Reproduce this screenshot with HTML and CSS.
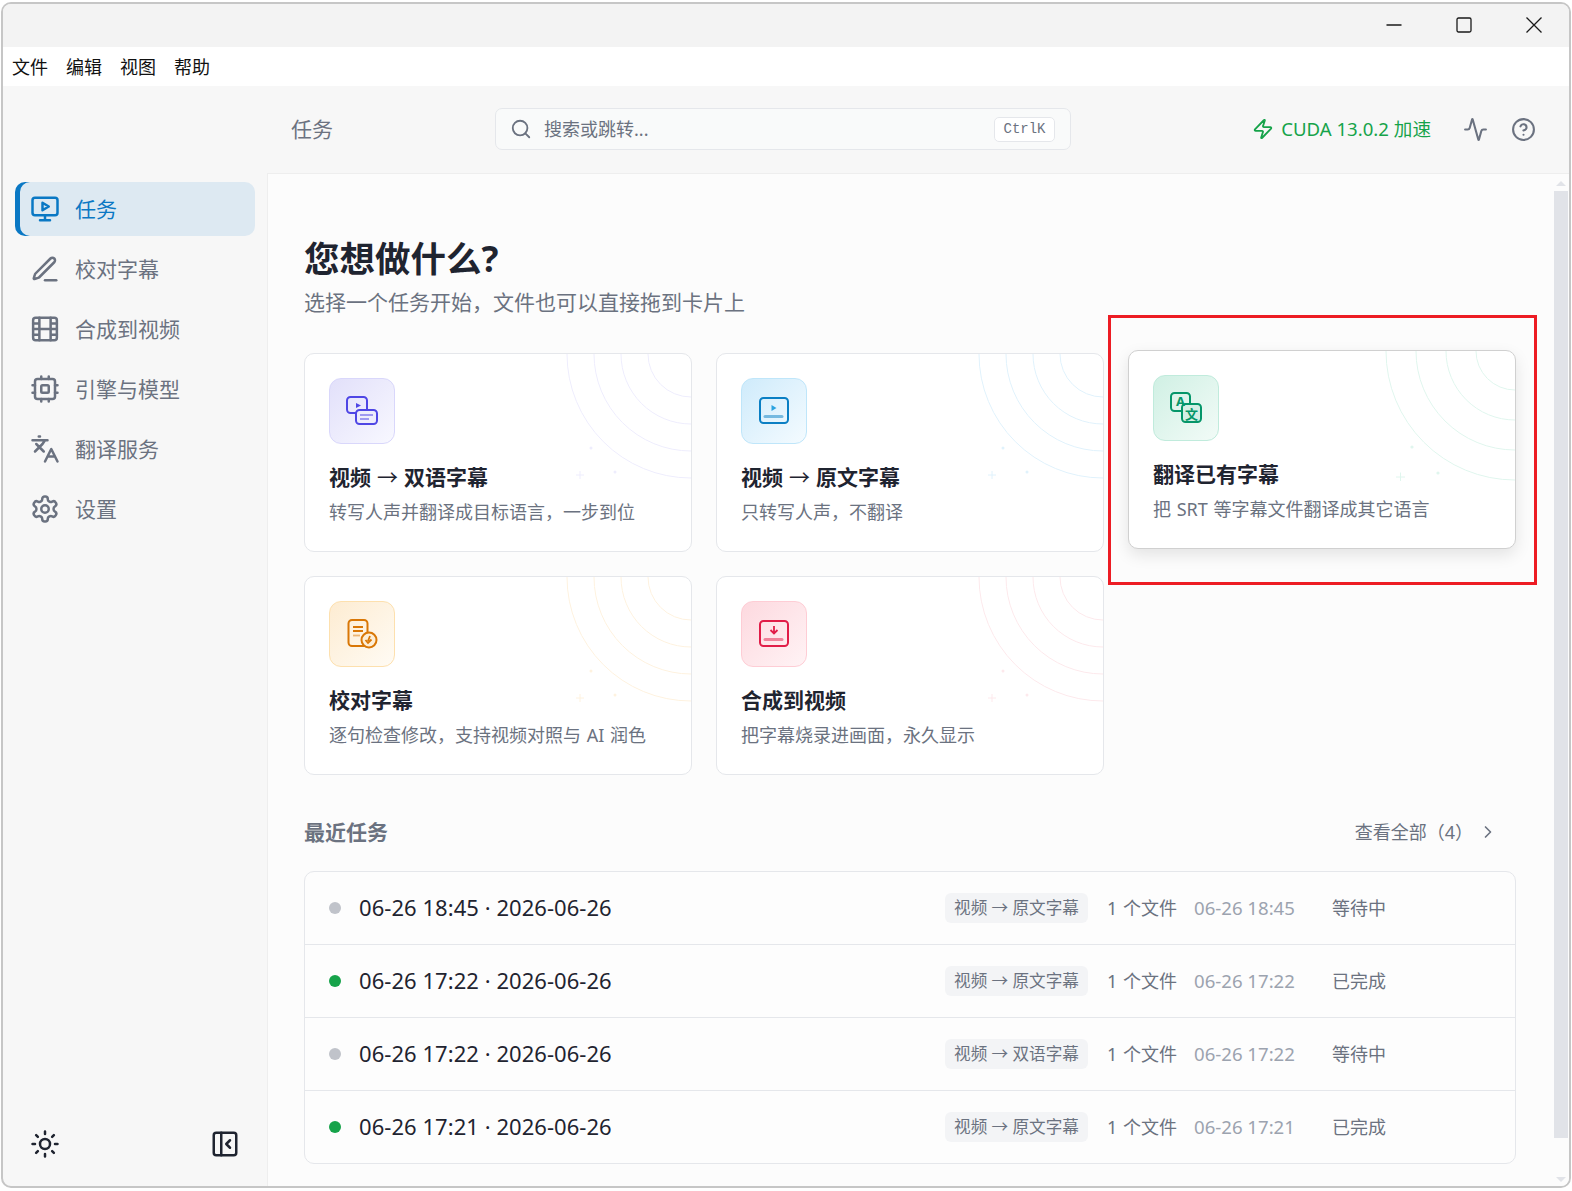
FILE: index.html
```html
<!DOCTYPE html>
<html lang="zh">

<head>
    <title>任务</title>
    <meta charset="utf-8">
    <meta name="viewport" content="width=device-width, initial-scale=1.0">
    <link rel="stylesheet" href="styles.css">
</head>

<body>
    <svg class="defs" width="0" height="0">
        <symbol id="rings" viewBox="0 0 130 130">
            <g fill="none" stroke="currentColor" stroke-width="1">
                <circle cx="130" cy="0" r="43" />
                <circle cx="130" cy="0" r="70" />
                <circle cx="130" cy="0" r="97" />
                <circle cx="130" cy="0" r="124" />
                <path d="M15 121h8M19 117v8" />
            </g>
            <circle cx="30" cy="94" r="1.5" fill="currentColor" />
            <circle cx="54" cy="118" r="1.5" fill="currentColor" />
        </symbol>
        <symbol id="rings-big" viewBox="0 0 130 130">
            <g fill="none" stroke="currentColor" stroke-width="1">
                <circle cx="130" cy="0" r="39" />
                <circle cx="130" cy="0" r="69" />
                <circle cx="130" cy="0" r="99" />
                <circle cx="130" cy="0" r="129" />
                <path d="M11 126h9M15.500 121.500v9" />
            </g>
            <circle cx="27" cy="96" r="1.600" fill="currentColor" />
            <circle cx="53" cy="122" r="1.600" fill="currentColor" />
        </symbol>
    </svg>

    <div class="window">
        <div class="titlebar">
            <button class="winbtn"><svg viewBox="0 0 16 16" width="16" height="16">
                    <path d="M0.500 8h15" />
                </svg></button>
            <button class="winbtn"><svg viewBox="0 0 16 16" width="16" height="16">
                    <rect x="1" y="1" width="14" height="14" rx="1.500" />
                </svg></button>
            <button class="winbtn"><svg viewBox="0 0 16 16" width="16" height="16">
                    <path d="M0.500 0.500l15 15M15.500 0.500l-15 15" />
                </svg></button>
        </div>

        <div class="menubar">
            <span>文件</span>
            <span>编辑</span>
            <span>视图</span>
            <span>帮助</span>
        </div>

        <div class="app">
            <aside class="sidebar">
                <nav class="nav">
                    <a class="nav-item active">
                        <svg class="ico" viewBox="0 0 24 24">
                            <rect x="2" y="3" width="20" height="14" rx="2" />
                            <path d="M12 17v4M8 21h8" />
                            <path d="M10 7l5 3-5 3z" />
                        </svg>
                        任务
                    </a>
                    <a class="nav-item">
                        <svg class="ico" viewBox="0 0 24 24">
                            <path d="M12 21h9" />
                            <path d="M16.400 3.600a2.100 2.100 0 0 1 3 3L7.400 18.600a2 2 0 0 1-.9.500l-2.900.900a.5.5 0 0 1-.6-.6l.9-2.900a2 2 0 0 1 .5-.9z" />
                        </svg>
                        校对字幕
                    </a>
                    <a class="nav-item">
                        <svg class="ico" viewBox="0 0 24 24">
                            <rect x="2.500" y="3" width="19" height="18" rx="2" />
                            <path d="M7.500 3v18M16.500 3v18M2.500 12h19M2.500 7.500h5M2.500 16.500h5M16.500 7.500h5M16.500 16.500h5" />
                        </svg>
                        合成到视频
                    </a>
                    <a class="nav-item">
                        <svg class="ico" viewBox="0 0 24 24">
                            <rect x="4" y="4" width="16" height="16" rx="2" />
                            <rect x="9" y="9" width="6" height="6" rx="1" />
                            <path d="M15 2v2M15 20v2M2 15h2M2 9h2M20 15h2M20 9h2M9 2v2M9 20v2" />
                        </svg>
                        引擎与模型
                    </a>
                    <a class="nav-item">
                        <svg class="ico" viewBox="0 0 24 24">
                            <path d="M5 8l6 6M4 14l6-6 2-3M2 5h12M7 2h1M22 22l-5-10-5 10M14 18h6" />
                        </svg>
                        翻译服务
                    </a>
                    <a class="nav-item">
                        <svg class="ico" viewBox="0 0 24 24">
                            <path d="M12.220 2h-.44a2 2 0 0 0-2 2v.18a2 2 0 0 1-1 1.730l-.43.250a2 2 0 0 1-2 0l-.15-.08a2 2 0 0 0-2.730.730l-.22.380a2 2 0 0 0 .730 2.730l.15.100a2 2 0 0 1 1 1.720v.510a2 2 0 0 1-1 1.740l-.15.090a2 2 0 0 0-.730 2.730l.22.380a2 2 0 0 0 2.730.730l.15-.08a2 2 0 0 1 2 0l.43.250a2 2 0 0 1 1 1.730V20a2 2 0 0 0 2 2h.44a2 2 0 0 0 2-2v-.18a2 2 0 0 1 1-1.730l.43-.25a2 2 0 0 1 2 0l.15.080a2 2 0 0 0 2.730-.730l.22-.39a2 2 0 0 0-.730-2.730l-.15-.08a2 2 0 0 1-1-1.740v-.5a2 2 0 0 1 1-1.740l.15-.09a2 2 0 0 0 .730-2.730l-.22-.38a2 2 0 0 0-2.730-.730l-.15.080a2 2 0 0 1-2 0l-.43-.25a2 2 0 0 1-1-1.730V4a2 2 0 0 0-2-2z" />
                            <circle cx="12" cy="12" r="3" />
                        </svg>
                        设置
                    </a>
                </nav>

                <div class="side-foot">
                    <svg class="ico dark" viewBox="0 0 24 24">
                        <circle cx="12" cy="12" r="4" />
                        <path d="M12 2v2M12 20v2M4.900 4.900l1.400 1.400M17.700 17.700l1.400 1.400M2 12h2M20 12h2M6.300 17.700l-1.400 1.400M19.100 4.900l-1.400 1.400" />
                    </svg>
                    <svg class="ico dark" viewBox="0 0 24 24">
                        <rect x="3" y="3" width="18" height="18" rx="2" />
                        <path d="M9 3v18M16 15l-3-3 3-3" />
                    </svg>
                </div>
            </aside>

            <div class="right">
                <header class="topbar">
                    <div class="page-title">任务</div>
                    <div class="search">
                        <svg class="search-ico" viewBox="0 0 24 24">
                            <circle cx="11" cy="11" r="8" />
                            <path d="M21 21l-4.300-4.300" />
                        </svg>
                        <span class="search-text">搜索或跳转...</span>
                        <kbd>CtrlK</kbd>
                    </div>
                    <div class="top-actions">
                        <svg class="bolt" viewBox="0 0 24 24">
                            <path d="M4 14a1 1 0 0 1-.78-1.630l9.900-10.200a.5.5 0 0 1 .86.46l-1.920 6.020A1 1 0 0 0 13 10h7a1 1 0 0 1 .78 1.630l-9.900 10.200a.5.5 0 0 1-.86-.46l1.920-6.020A1 1 0 0 0 11 14z" />
                        </svg>
                        <span class="cuda">CUDA 13.0.2 加速</span>
                        <svg class="ico top-ico first" viewBox="0 0 24 24">
                            <path d="M22 12h-2.480a2 2 0 0 0-1.930 1.460l-2.350 8.360a.25.25 0 0 1-.48 0L9.240 2.180a.25.25 0 0 0-.48 0l-2.350 8.360A2 2 0 0 1 4.490 12H2" />
                        </svg>
                        <svg class="ico top-ico" viewBox="0 0 24 24">
                            <circle cx="12" cy="12" r="10" />
                            <path d="M9.090 9a3 3 0 0 1 5.830 1c0 2-3 3-3 3M12 17h.01" />
                        </svg>
                    </div>
                </header>

                <main class="main">
                    <div class="content">
                        <h1>您想做什么?</h1>
                        <p class="sub">选择一个任务开始，文件也可以直接拖到卡片上</p>

                        <div class="cards">
                            <div class="card indigo">
                                <svg class="rings"><use href="#rings" /></svg>
                                <div class="tile">
                                    <svg viewBox="0 0 66 66">
                                        <rect x="18" y="19" width="20" height="16" rx="3.500" class="line" />
                                        <path d="M27 25l5 2.500-5 2.500z" class="solid" />
                                        <rect x="27" y="32" width="21" height="14" rx="3.500" class="line back" />
                                        <path d="M31 37h13M31 41h9" class="soft" />
                                    </svg>
                                </div>
                                <h3>视频 <span class="arw">→</span> 双语字幕</h3>
                                <p>转写人声并翻译成目标语言，一步到位</p>
                            </div>

                            <div class="card blue">
                                <svg class="rings"><use href="#rings" /></svg>
                                <div class="tile">
                                    <svg viewBox="0 0 66 66">
                                        <rect x="19" y="20" width="28" height="25" rx="3.500" class="line" />
                                        <path d="M30.500 27l5 3-5 3z" class="solid tint" />
                                        <path d="M24 38.500h17" class="soft thick" />
                                    </svg>
                                </div>
                                <h3>视频 <span class="arw">→</span> 原文字幕</h3>
                                <p>只转写人声，不翻译</p>
                            </div>

                            <div class="card green hovered">
                                <svg class="rings"><use href="#rings-big" /></svg>
                                <div class="tile">
                                    <svg viewBox="0 0 66 66">
                                        <rect x="18" y="18" width="19" height="18" rx="3.500" class="line" />
                                        <rect x="29" y="29" width="19" height="18" rx="3.500" class="line back" />
                                        <text x="27.500" y="31" class="tile-letter">A</text>
                                        <text x="38.500" y="43.500" class="tile-letter">文</text>
                                    </svg>
                                </div>
                                <h3>翻译已有字幕</h3>
                                <p>把 SRT 等字幕文件翻译成其它语言</p>
                                <div class="annotation"></div>
                            </div>

                            <div class="card orange">
                                <svg class="rings"><use href="#rings" /></svg>
                                <div class="tile">
                                    <svg viewBox="0 0 66 66">
                                        <rect x="19.500" y="19" width="19" height="26" rx="3.500" class="line" />
                                        <path d="M24 26h10M24 30h10" class="bar" />
                                        <path d="M24 34.500h7" class="soft" />
                                        <circle cx="40" cy="39" r="7.500" class="line back" />
                                        <path d="M41 35l-2 5M36.500 39l2.500 3 3.500-3.500" class="bar" />
                                    </svg>
                                </div>
                                <h3>校对字幕</h3>
                                <p>逐句检查修改，支持视频对照与 AI 润色</p>
                            </div>

                            <div class="card pink">
                                <svg class="rings"><use href="#rings" /></svg>
                                <div class="tile">
                                    <svg viewBox="0 0 66 66">
                                        <rect x="19" y="20" width="28" height="25" rx="3.500" class="line" />
                                        <path d="M33 25v7M29.500 29l3.500 3.500 3.500-3.500" class="bar" />
                                        <path d="M24 38.500h17" class="soft thick" />
                                    </svg>
                                </div>
                                <h3>合成到视频</h3>
                                <p>把字幕烧录进画面，永久显示</p>
                            </div>
                        </div>

                        <div class="recent-head">
                            <h2>最近任务</h2>
                            <a class="see-all">查看全部（4）
                                <svg class="ico chev" viewBox="0 0 24 24">
                                    <path d="M9 18l6-6-6-6" />
                                </svg>
                            </a>
                        </div>

                        <div class="tasks">
                            <div class="task">
                                <i class="dot"></i>
                                <span class="task-name">06-26 18:45 · 2026-06-26</span>
                                <span class="tag">视频 → 原文字幕</span>
                                <span class="files">1 个文件</span>
                                <span class="time">06-26 18:45</span>
                                <span class="status">等待中</span>
                            </div>
                            <div class="task">
                                <i class="dot done"></i>
                                <span class="task-name">06-26 17:22 · 2026-06-26</span>
                                <span class="tag">视频 → 原文字幕</span>
                                <span class="files">1 个文件</span>
                                <span class="time">06-26 17:22</span>
                                <span class="status">已完成</span>
                            </div>
                            <div class="task">
                                <i class="dot"></i>
                                <span class="task-name">06-26 17:22 · 2026-06-26</span>
                                <span class="tag">视频 → 双语字幕</span>
                                <span class="files">1 个文件</span>
                                <span class="time">06-26 17:22</span>
                                <span class="status">等待中</span>
                            </div>
                            <div class="task">
                                <i class="dot done"></i>
                                <span class="task-name">06-26 17:21 · 2026-06-26</span>
                                <span class="tag">视频 → 原文字幕</span>
                                <span class="files">1 个文件</span>
                                <span class="time">06-26 17:21</span>
                                <span class="status">已完成</span>
                            </div>
                        </div>
                    </div>

                    <div class="scrollbar">
                        <i class="arrow up"></i>
                        <div class="thumb"></div>
                        <i class="arrow down"></i>
                    </div>
                </main>
            </div>
        </div>
    </div>
</body>

</html>
```

FILE: styles.css
```css
* {
    box-sizing: border-box;
}

html,
body {
    margin: 0;
    height: 100%;
    background-color: #ffffff;
}

body {
    padding: 2px 1px 3px 1px;
    font-family: "Noto Sans", "Noto Sans CJK SC", sans-serif;
    color: #1f2430;
}

.defs {
    position: absolute;
}

.window {
    height: 1186px;
    border: 2px solid #c6c6c6;
    border-radius: 10px;
    overflow: hidden;
    display: flex;
    flex-direction: column;
    background-color: #f7f7f7;
}

/* title + menu */

.titlebar {
    height: 43px;
    flex: none;
    display: flex;
    justify-content: flex-end;
    padding-bottom: 2px;
    background-color: #f3f3f3;
}

.winbtn {
    width: 70px;
    border: none;
    padding: 0;
    background: none;
    display: flex;
    align-items: center;
    justify-content: center;
}

.winbtn svg {
    fill: none;
    stroke: #1a1a1a;
    stroke-width: 1.3;
}

.menubar {
    height: 39px;
    flex: none;
    display: flex;
    align-items: center;
    gap: 18px;
    padding: 0 0 2px 9px;
    background-color: #ffffff;
    font-size: 18px;
    color: #111111;
}

.app {
    flex: 1;
    min-height: 0;
    display: flex;
}

/* sidebar */

.ico {
    width: 30px;
    height: 30px;
    flex: none;
    fill: none;
    stroke: currentColor;
    stroke-width: 2;
    stroke-linecap: round;
    stroke-linejoin: round;
}

.ico.dark {
    color: #1f2430;
}

.sidebar {
    width: 264px;
    flex: none;
    display: flex;
    flex-direction: column;
    padding: 96px 12px 27px 12px;
}

.nav {
    display: flex;
    flex-direction: column;
    gap: 6px;
}

.nav-item {
    height: 54px;
    display: flex;
    align-items: center;
    gap: 15px;
    padding: 0 0 2px 15px;
    border-radius: 10px;
    font-size: 21px;
    color: #6b7280;
}

.nav-item .ico {
    margin-top: 2px;
}

.nav-item.active {
    background-color: #dde9f2;
    color: #0a78c4;
    box-shadow: inset 5px 0 0 #0a78c4;
}

.side-foot {
    margin-top: auto;
    display: flex;
    justify-content: space-between;
    padding: 0 15px;
}

/* top */

.right {
    flex: 1;
    min-width: 0;
    display: flex;
    flex-direction: column;
}

.topbar {
    height: 87px;
    flex: none;
    display: flex;
    align-items: center;
    padding: 0 33px 1px 23px;
    border-left: 1px solid #f7f7f7;
}

.page-title {
    width: 204px;
    padding-bottom: 2px;
    font-size: 21px;
    color: #6b7280;
}

.search {
    width: 576px;
    height: 42px;
    display: flex;
    align-items: center;
    padding: 0 15px 0 14px;
    border: 1px solid #e5e7eb;
    border-radius: 7px;
    background-color: #f9fafa;
}

.search-ico {
    width: 22px;
    height: 22px;
    fill: none;
    stroke: #6b7280;
    stroke-width: 2;
    stroke-linecap: round;
}

.search-text {
    flex: 1;
    margin-left: 12px;
    padding-bottom: 2px;
    font-size: 18px;
    color: #6b7280;
}

kbd {
    width: 61px;
    height: 25px;
    display: flex;
    align-items: center;
    justify-content: center;
    border: 1px solid #e5e7eb;
    border-radius: 5px;
    background-color: #ffffff;
    font-family: "Liberation Mono", monospace;
    font-size: 14px;
    color: #6b7280;
}

.top-actions {
    margin-left: auto;
    display: flex;
    align-items: center;
}

.bolt {
    width: 22px;
    height: 22px;
    fill: none;
    stroke: #16a34a;
    stroke-width: 2;
    stroke-linejoin: round;
}

.cuda {
    margin-left: 7px;
    padding-bottom: 4px;
    font-size: 18.600px;
    color: #16a34a;
}

.top-ico {
    width: 25px;
    height: 25px;
    margin-left: 23px;
    color: #6b7280;
}

.top-ico.first {
    margin-left: 32px;
}

/* main */

.main {
    flex: 1;
    min-height: 0;
    display: flex;
    background-color: #fcfcfc;
    border-left: 1px solid #eeeeee;
    border-top: 1px solid #eeeeee;
}

.content {
    flex: 1;
    min-width: 0;
    padding: 61px 38px 0 36px;
}

h1 {
    margin: 0;
    font-size: 35.500px;
    line-height: 46px;
    font-weight: 700;
    color: #1f2430;
}

.sub {
    margin: 6px 0 36px 0;
    font-size: 21px;
    line-height: 30px;
    color: #6b7280;
}

.cards {
    display: grid;
    grid-template-columns: repeat(3, 388px);
    gap: 24px;
}

.card {
    position: relative;
    height: 199px;
    padding: 24px;
    border: 1px solid #e5e7eb;
    border-radius: 10px;
    background-color: #ffffff;
}

.card h3 {
    margin: 19px 0 7px 0;
    font-size: 21px;
    line-height: 29px;
    font-weight: 700;
    word-spacing: 0.500px;
    color: #1f2430;
}

.arw {
    font-weight: 400;
}

.card p {
    margin: 0;
    font-size: 18px;
    line-height: 26px;
    word-spacing: 1px;
    color: #6b7280;
}

.card.hovered {
    transform: translateY(-3px);
    border-color: #d0d0d0;
    box-shadow: 0 6px 16px rgba(0, 0, 0, 0.1);
}

.rings {
    position: absolute;
    top: 0;
    right: 0;
    width: 130px;
    height: 130px;
    border-top-right-radius: 10px;
    overflow: hidden;
}

.tile {
    position: relative;
    width: 66px;
    height: 66px;
    border: 1px solid;
    border-radius: 12px;
}

.tile svg {
    position: absolute;
    top: -1px;
    left: -1px;
    width: 66px;
    height: 66px;
}

.line {
    fill: none;
    stroke: var(--ink);
    stroke-width: 2;
}

.line.back {
    fill: var(--wash);
}

.solid {
    fill: var(--ink);
}

.solid.tint {
    fill: #2ba3e0;
}

.bar {
    fill: none;
    stroke: var(--ink);
    stroke-width: 1.800;
}

.soft {
    fill: none;
    stroke: var(--ink);
    stroke-opacity: 0.5;
    stroke-width: 1.800;
}

.soft.thick {
    stroke-width: 3;
    stroke-linecap: round;
}

.tile-letter {
    font-size: 13px;
    font-weight: 700;
    text-anchor: middle;
    fill: var(--ink);
}

.indigo {
    --ink: #4f46e5;
    --wash: #eeedfc;
    color: #eeedfd;
}

.indigo .tile {
    border-color: #d9d7fb;
    background: linear-gradient(135deg, #e2e0fa, #f8f8ff);
}

.blue {
    --ink: #0a7fc4;
    --wash: #e4f4fd;
    color: #e0f2fc;
}

.blue .tile {
    border-color: #bfe6fa;
    background: linear-gradient(135deg, #cfebfb, #f4fbff);
}

.green {
    --ink: #059669;
    --wash: #d5efe5;
    color: #e0f6ee;
}

.green .tile {
    border-color: #c0ebdc;
    background: linear-gradient(135deg, #d0f0e4, #f2fbf7);
}

.orange {
    --ink: #d97706;
    --wash: #fdeed6;
    color: #fef2df;
}

.orange .tile {
    border-color: #fde0ae;
    background: linear-gradient(135deg, #fdecd2, #fffbf4);
}

.pink {
    --ink: #e11d48;
    --wash: #fde3e7;
    color: #fde9ec;
}

.pink .tile {
    border-color: #fecdd5;
    background: linear-gradient(135deg, #fdd9df, #fff3f5);
}

/* red marker drawn on the screenshot */
.annotation {
    position: absolute;
    top: -36px;
    left: -21px;
    width: 429px;
    height: 270px;
    border: 3px solid #ed1c24;
}

/* recent */

.recent-head {
    margin-top: 42px;
    display: flex;
    align-items: center;
    justify-content: space-between;
    height: 30px;
    padding-bottom: 2px;
    margin-bottom: 24px;
}

h2 {
    margin: 0;
    font-size: 21px;
    font-weight: 700;
    color: #6b7280;
}

.see-all {
    display: flex;
    align-items: center;
    gap: 5px;
    padding-right: 18px;
    font-size: 18px;
    color: #6b7280;
}

.chev {
    width: 20px;
    height: 20px;
    margin-top: 2px;
    stroke-width: 2;
}

.tasks {
    border: 1px solid #e5e7eb;
    border-radius: 10px;
    background-color: #fdfdfd;
}

.task {
    height: 73px;
    display: flex;
    align-items: center;
    padding-left: 24px;
    border-bottom: 1px solid #e5e7eb;
}

.task:last-child {
    height: 72px;
    border-bottom: none;
}

.dot {
    width: 12px;
    height: 12px;
    border-radius: 50%;
    background-color: #c0c3ca;
}

.dot.done {
    background-color: #16a34a;
}

.task-name {
    flex: 1;
    margin-left: 18px;
    padding-bottom: 2px;
    font-size: 22px;
    letter-spacing: 0.050px;
    color: #1f2430;
}

.tag {
    width: 143px;
    height: 30px;
    display: flex;
    align-items: center;
    justify-content: center;
    padding-bottom: 2px;
    border-radius: 6px;
    background-color: #f3f4f6;
    font-size: 16.600px;
    color: #6b7280;
    white-space: nowrap;
}

.files {
    width: 69px;
    margin-left: 19px;
    padding-bottom: 2px;
    font-size: 18px;
    word-spacing: 1px;
    color: #6b7280;
    white-space: nowrap;
}

.time {
    width: 102px;
    margin-left: 18px;
    padding-bottom: 2px;
    font-size: 18.600px;
    color: #9ca3af;
    white-space: nowrap;
}

.status {
    width: 183px;
    margin-left: 36px;
    padding-bottom: 2px;
    font-size: 18px;
    color: #6b7280;
}

/* scrollbar */

.scrollbar {
    width: 14px;
    flex: none;
    display: flex;
    flex-direction: column;
    align-items: center;
    margin-right: 1px;
}

.thumb {
    flex: 1;
    width: 100%;
    background-color: #e1e3e8;
}

.arrow {
    width: 0;
    height: 0;
    border-left: 5px solid transparent;
    border-right: 5px solid transparent;
}

.arrow.up {
    margin: 7px 0 5px 0;
    border-bottom: 5px solid #e1e3e8;
}

.arrow.down {
    margin: 39px 0 4px 0;
    border-top: 5px solid #e1e3e8;
}
```
